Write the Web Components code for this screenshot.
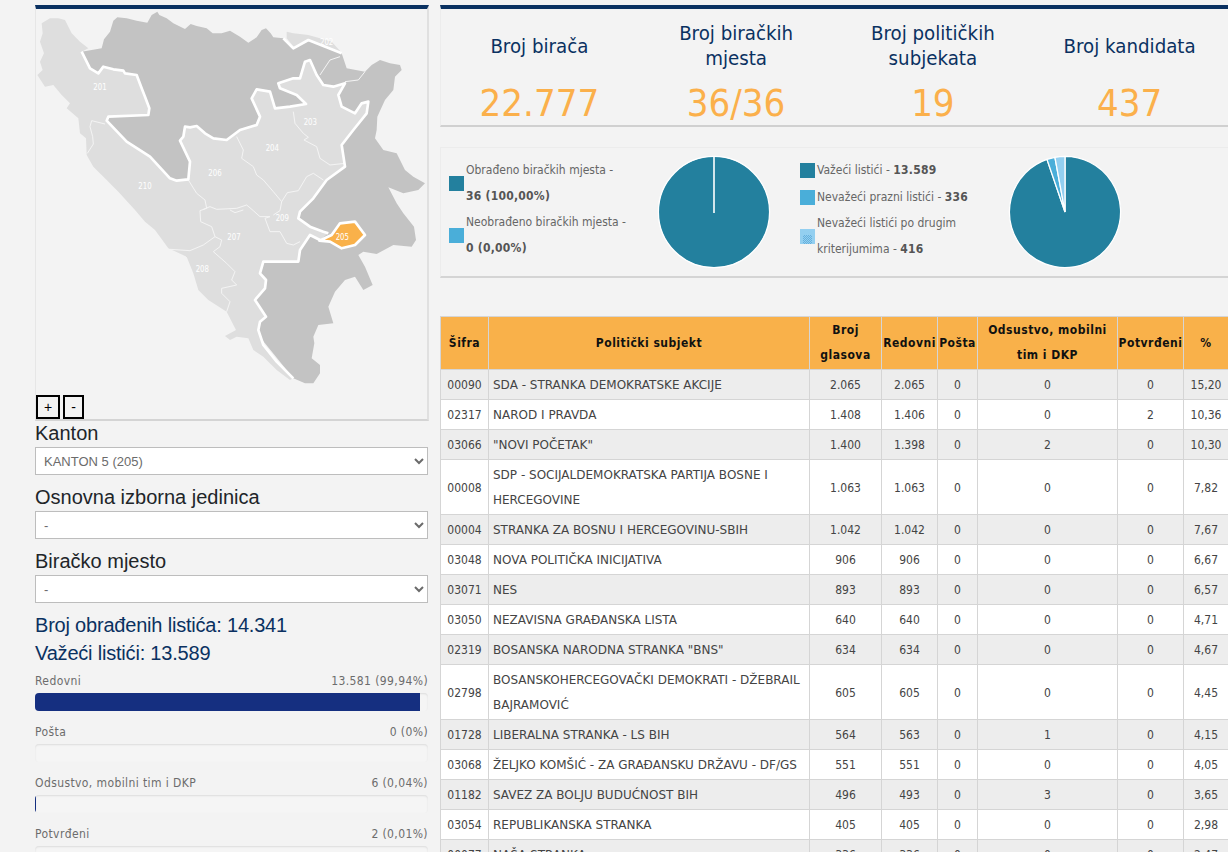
<!DOCTYPE html>
<html lang="bs"><head><meta charset="utf-8"><title>Izbori</title>
<style>
html,body{margin:0;padding:0;height:852px;overflow:hidden;background:#f3f3f3}
</style></head><body>
<election-page>
  <map-panel slot="left"></map-panel>
  <field-select slot="left" label="Kanton" value="KANTON 5 (205)"></field-select>
  <field-select slot="left" label="Osnovna izborna jedinica" value="-"></field-select>
  <field-select slot="left" label="Biračko mjesto" value="-"></field-select>
  <ballot-totals slot="left"></ballot-totals>
  <progress-row slot="left" label="Redovni" value="13.581 (99,94%)" fill="98"></progress-row>
  <progress-row slot="left" label="Pošta" value="0 (0%)" fill="0"></progress-row>
  <progress-row slot="left" label="Odsustvo, mobilni tim i DKP" value="6 (0,04%)" fill="0.3"></progress-row>
  <progress-row slot="left" label="Potvrđeni" value="2 (0,01%)" fill="0"></progress-row>

  <stats-panel slot="right">
    <stat-card title-text="Broj birača" value="22.777"></stat-card>
    <stat-card title-text="Broj biračkih mjesta" value="36/36"></stat-card>
    <stat-card title-text="Broj političkih subjekata" value="19"></stat-card>
    <stat-card title-text="Broj kandidata" value="437"></stat-card>
  </stats-panel>
  <charts-panel slot="right">
    <chart-group variant="a">
      <legend-item color="#23809e">Obrađeno biračkih mjesta -<br><b>36 (100,00%)</b></legend-item>
      <legend-item color="#4aaed9">Neobrađeno biračkih mjesta -<br><b>0 (0,00%)</b></legend-item>
    </chart-group>
    <chart-group variant="b">
      <legend-item color="#23809e">Važeći listići - <b>13.589</b></legend-item>
      <legend-item color="#4aaed9">Nevažeći prazni listići - <b>336</b></legend-item>
      <legend-item color="#93cff0" pattern>Nevažeći listići po drugim<br>kriterijumima - <b>416</b></legend-item>
    </chart-group>
  </charts-panel>
  <results-table slot="right"></results-table>
</election-page>
<script>
const UI='"DejaVu Sans Condensed","DejaVu Sans",sans-serif';
function def(name,css,html,init){
  customElements.define(name,class extends HTMLElement{
    connectedCallback(){
      if(this.shadowRoot)return;
      const r=this.attachShadow({mode:'open'});
      r.innerHTML='<style>'+css+'</style>'+(typeof html==='function'?html(this):html);
      if(init)init(r,this);
    }
  });
}
def('election-page',`:host{display:grid;grid-template-columns:394px 788px;column-gap:11px;padding-left:35px;align-items:start}
.c{display:flex;flex-direction:column;min-width:0}`,`<div class="c"><slot name="left"></slot></div><div class="c"><slot name="right"></slot></div>`);

const dark=`M155 155 L215 145 222 118 240 95 250 62 262 52 290 55 320 62 352 68 365 45 382 35 388 45 410 55 430 70 465 87 482 72 500 78 530 85 548 100 575 100 600 92 630 110 655 128 680 112 695 90 708 85 722 100 730 112 760 115 790 145 835 120 935 160 950 205 1005 215 1025 195 1050 180 1080 190 1110 195 1115 210 1095 230 1090 270 1065 300 1042 350 1040 390 1035 415 1060 450 1100 460 1125 510 1150 530 1185 550 1165 570 1120 580 1075 562 1100 610 1120 640 1152 680 1158 720 1145 740 1090 735 1040 762 1000 755 985 765 1005 800 1028 855 1000 870 975 830 945 840 915 875 895 920 910 970 865 975 850 1010 853 1030 845 1075 870 1095 870 1120 850 1150 825 1150 790 1135 600 900 300 600 180 400 160 250 Z`;
const white=`M155 155 L180 205 205 220 220 200 250 208 280 212 285 220 320 225 335 265 345 290 358 325 355 345 235 350 230 362 290 425 360 470 420 535 440 542 475 538 480 485 450 422 460 410 465 380 480 382 500 378 525 400 550 415 590 420 630 390 680 375 690 350 665 295 680 268 720 275 735 325 780 320 828 312 800 285 750 265 745 250 790 235 810 235 825 185 840 180 860 225 880 255 910 260 945 250 925 285 935 320 975 340 995 310 1015 305 1010 340 970 390 935 435 945 500 890 540 850 595 810 635 805 655 840 680 880 695 895 700`;
const white2=`M870 720 L840 705 810 750 805 785 750 785 700 785 690 820 708 840 705 865 675 900 685 915 708 950 690 965 685 990 700 1035 740 1085 790 1135`;
const light=`M155 155 L175 145 150 125 125 100 105 60 85 55 60 55 35 70 38 100 30 125 42 160 30 185 38 210 22 225 45 260 70 255 95 285 120 310 110 325 145 355 150 400 168 415 170 465 190 500 230 540 265 575 315 630 345 665 375 690 415 745 470 770 490 820 505 870 535 900 590 935 618 990 585 1008 600 1020 620 1010 655 1015 670 1050 700 1070 740 1110 780 1140 790 1135 740 1085 700 1035 685 990 690 965 708 950 685 915 675 900 705 865 708 840 690 820 700 785 750 785 805 785 810 750 840 705 870 720 895 700 880 695 840 680 805 655 810 635 850 595 890 540 945 500 935 435 970 390 1010 340 1015 305 995 310 975 340 935 320 925 285 945 250 910 260 880 255 860 225 840 180 825 185 810 235 790 235 745 250 750 265 800 285 828 312 780 320 735 325 720 275 680 268 665 295 690 350 680 375 630 390 590 420 550 415 525 400 500 378 480 382 465 380 460 410 450 422 480 485 475 538 440 542 420 535 360 470 290 425 230 362 235 350 355 345 358 325 345 290 335 265 320 225 285 220 280 212 250 208 220 200 205 220 180 205 Z`;
const brcko=`M770 95 L790 100 835 105 870 115 905 125 935 158 835 120 795 145 770 115 Z`;
const thin=[`M225 372 L185 362 180 380 188 410 190 432 172 460`,
`M790 335 L795 370 820 400 835 412 822 420 860 440 870 475 900 495 945 490`,
`M620 410 L640 450 635 475 670 500 680 525 700 540 730 575 755 605 750 632 730 645`,
`M755 605 L772 578 805 572 830 530 850 520 880 540`,
`M475 540 L500 580 525 600 530 625 510 632 512 665 545 680 555 710 575 720 570 740 550 755 590 790 615 815 605 840 620 855 575 865 575 880 600 905 590 935`,
`M420 748 L480 752 520 735 555 710`,
`M520 628 L540 620 560 628 620 625 650 615 670 632 690 650 720 650 705 655 720 695 750 695 770 730 790 735 810 725`,
`M600 630 L615 638 640 630`,
`M870 225 L900 180 930 170`,
`M945 245 L985 240 1005 215`];
const orange=`M868 722 L905 705 930 670 975 665 1005 705 975 735 935 745 900 725 Z`;
const labels=[[210,260,'201'],[890,125,'202'],[841,365,'203'],[727,443,'204'],[555,518,'206'],[345,557,'210'],[757,653,'209'],[612,710,'207'],[517,806,'208'],[937,710,'205']];
def('map-panel',`:host{display:block;position:relative;box-sizing:border-box;margin-top:5px;height:416px;border-top:4px solid #0a3161;border-left:1px solid #e6e6e6;border-right:2px solid #e0e0e0;border-bottom:2px solid #d4d4d4;background:#f3f3f3}
svg{display:block;width:391px;height:410px}
text{font-family:${UI};font-size:28px;fill:#fff;text-anchor:middle;dominant-baseline:central}
.b{position:absolute;top:386px;box-sizing:border-box;height:24px;border:2px solid #000;display:flex;align-items:center;justify-content:center;font:14px "Liberation Sans",sans-serif;color:#000}`,
`<svg viewBox="36 9 391 410" xmlns="http://www.w3.org/2000/svg">
<g transform="translate(30 0) scale(.33333)">
<path d="${dark}" fill="#c3c3c3"/>
<path d="${light}" fill="#dedede"/>
<path d="${brcko}" fill="#dedede"/>
${thin.map(d=>`<path d="${d}" fill="none" stroke="#f4f4f4" stroke-width="3" stroke-linejoin="round"/>`).join('')}
<path d="${white}" fill="none" stroke="#fff" stroke-width="8" stroke-linejoin="round"/>
<path d="${white2}" fill="none" stroke="#fff" stroke-width="8" stroke-linejoin="round"/>
<path d="M760 115 L790 145 835 120 935 160" fill="none" stroke="#fff" stroke-width="8" stroke-linejoin="round"/>
<path d="${orange}" fill="#f9b14a" stroke="#fff" stroke-width="8" stroke-linejoin="round"/>
${labels.map(l=>`<text x="${l[0]}" y="${l[1]}" textLength="40" lengthAdjust="spacingAndGlyphs">${l[2]}</text>`).join('')}
</g></svg>
<div class="b" style="left:0;width:24px">+</div><div class="b" style="left:27px;width:21px">-</div>`);

def('field-select',`:host{display:block;padding-right:1px;margin-top:10px}
:host(:first-of-type){margin-top:0}
label{display:block;height:26px;font:20px/24px "Liberation Sans",sans-serif;color:#212529}
select{display:block;width:100%;height:28px;box-sizing:border-box;border:1px solid #bdbdbd;background:#fff;color:#6b6b6b;font:13px "Liberation Sans",sans-serif;padding:0 4px;border-radius:0}`,
e=>`<label>${e.getAttribute('label')}</label><select><option>${e.getAttribute('value')}</option></select>`);

def('ballot-totals',`:host{display:block;margin-top:8px;font:20px/28px "Liberation Sans",sans-serif;letter-spacing:-.2px;color:#0a3161}
div{height:28px;white-space:nowrap}`,`<div>Broj obrađenih listića: 14.341</div><div>Važeći listići: 13.589</div>`);

def('progress-row',`:host{display:block;padding-right:1px;margin-bottom:7px;font:12px/28px ${UI};letter-spacing:.4px;color:#6c6c6c}
.h{display:flex;justify-content:space-between;height:26px}
.t{height:18px;background:#f5f5f5;border-radius:4px;box-shadow:inset 0 1px 2px rgba(0,0,0,.1);overflow:hidden}
.f{height:100%;background:#152f80}`,
e=>`<div class="h"><span>${e.getAttribute('label')}</span><span>${e.getAttribute('value')}</span></div><div class="t"><div class="f" style="width:${e.getAttribute('fill')}%"></div></div>`);

def('stats-panel',`:host{display:grid;grid-template-columns:repeat(4,1fr);box-sizing:border-box;height:122px;margin-top:5px;border-top:4px solid #0a3161;border-bottom:2px solid #d0d0d0;border-left:1px solid #ececec}`,`<slot></slot>`);
def('stat-card',`:host{display:block;text-align:center;padding-top:12px;min-width:0}
.t{height:50px;display:flex;align-items:center;justify-content:center;font:20.25px/25px ${UI};color:#0a3161;padding:0 30px}
.v{font:38px/44px ${UI};color:#fbb04b;margin-top:10px}`,
e=>`<div class="t"><span>${e.getAttribute('title-text')}</span></div><div class="v">${e.getAttribute('value')}</div>`);

def('charts-panel',`:host{display:flex;box-sizing:border-box;height:131px;margin-top:20px;border-top:1px solid #ececec;border-left:1px solid #ececec;border-bottom:2px solid #d4d4d4}`,`<slot></slot>`);
function arc(a0,a1,r){const c=57,p=a=>{const t=(a-90)*Math.PI/180;return (c+r*Math.cos(t)).toFixed(2)+' '+(c+r*Math.sin(t)).toFixed(2)};
 return `M57 57 L${p(a0)} A${r} ${r} 0 ${a1-a0>180?1:0} 1 ${p(a1)} Z`}
def('chart-group',`:host{display:flex;width:351px;flex:none;box-sizing:border-box;padding-left:8px}
.l{width:208px;padding-top:10px;display:flex;flex-direction:column}
svg{display:block;width:114px;height:114px;margin-top:7px}`,
e=>{
 const v=e.getAttribute('variant');
 const g=v==='a'?`<circle cx="57" cy="57" r="55.6" fill="#23809e" stroke="#fff" stroke-width="1.3"/><path d="M57 1 V58" stroke="#fff" stroke-width="1.6"/>`
 :`<path d="${arc(0,341.1,55.6)}" fill="#23809e" stroke="#fff" stroke-width="1.3"/><path d="${arc(341.1,349.55,55.6)}" fill="#4aaed9" stroke="#fff" stroke-width="1.3"/><path d="${arc(349.55,360,55.6)}" fill="#93cff0" stroke="#fff" stroke-width="1.3"/>`;
 return `<div class="l"><slot></slot></div><svg viewBox="0 0 114 114">${g}</svg>`;
});
def('legend-item',`:host{display:flex;align-items:center;margin-bottom:1px;font:12px/25.5px ${UI};color:#666}
.s{flex:none;width:15px;height:15px;margin-right:2px;position:relative}
.p{position:absolute;left:3px;right:3px;bottom:0;height:9px;background:repeating-conic-gradient(#5aa8d8 0 25%,#93cff0 0 50%) 0 0/2px 2px;opacity:.8}
::slotted(b){color:#555;letter-spacing:.25px}`,
e=>`<span class="s" style="background:${e.getAttribute('color')}">${e.hasAttribute('pattern')?'<i class="p"></i>':''}</span><span><slot></slot></span>`);

const rows=[['00090','SDA - STRANKA DEMOKRATSKE AKCIJE','2.065','2.065','0','0','0','15,20'],
['02317','NAROD I PRAVDA','1.408','1.406','0','0','2','10,36'],
['03066','"NOVI POČETAK"','1.400','1.398','0','2','0','10,30'],
['00008','SDP - SOCIJALDEMOKRATSKA PARTIJA BOSNE I HERCEGOVINE','1.063','1.063','0','0','0','7,82'],
['00004','STRANKA ZA BOSNU I HERCEGOVINU-SBIH','1.042','1.042','0','0','0','7,67'],
['03048','NOVA POLITIČKA INICIJATIVA','906','906','0','0','0','6,67'],
['03071','NES','893','893','0','0','0','6,57'],
['03050','NEZAVISNA GRAĐANSKA LISTA','640','640','0','0','0','4,71'],
['02319','BOSANSKA NARODNA STRANKA "BNS"','634','634','0','0','0','4,67'],
['02798','BOSANSKOHERCEGOVAČKI DEMOKRATI - DŽEBRAIL BAJRAMOVIĆ','605','605','0','0','0','4,45'],
['01728','LIBERALNA STRANKA - LS BIH','564','563','0','1','0','4,15'],
['03068','ŽELJKO KOMŠIĆ - ZA GRAĐANSKU DRŽAVU - DF/GS','551','551','0','0','0','4,05'],
['01182','SAVEZ ZA BOLJU BUDUĆNOST BIH','496','493','0','3','0','3,65'],
['03054','REPUBLIKANSKA STRANKA','405','405','0','0','0','2,98'],
['00077','NAŠA STRANKA','336','336','0','0','0','2,47']];
def('results-table',`:host{display:block;margin-top:38px;width:788px}
table{border-collapse:collapse;table-layout:fixed;width:788px;font:12px/25px ${UI};color:#444;background:#fff}
th,td{border:1px solid #d5d5d5;padding:3px 0 1px;text-align:center;vertical-align:middle}
th{background:#f9b14a;color:#111;font-weight:bold;padding:1px 0;letter-spacing:.5px}
td.n{text-align:left;padding-left:4px;padding-right:4px;font-family:"DejaVu Sans",sans-serif}
tr:nth-child(odd) td{background:#ededed}`,
`<table><colgroup><col style="width:48px"><col style="width:321px"><col style="width:72px"><col style="width:56px"><col style="width:40px"><col style="width:140px"><col style="width:66px"><col style="width:45px"></colgroup>
<thead><tr><th>Šifra</th><th>Politički subjekt</th><th>Broj<br>glasova</th><th>Redovni</th><th>Pošta</th><th>Odsustvo, mobilni<br>tim i DKP</th><th>Potvrđeni</th><th>%</th></tr></thead>
<tbody>${rows.map(r=>`<tr>${r.map((c,i)=>`<td${i==1?' class="n"':''}>${c}</td>`).join('')}</tr>`).join('')}</tbody></table>`);
</script>
</body></html>
